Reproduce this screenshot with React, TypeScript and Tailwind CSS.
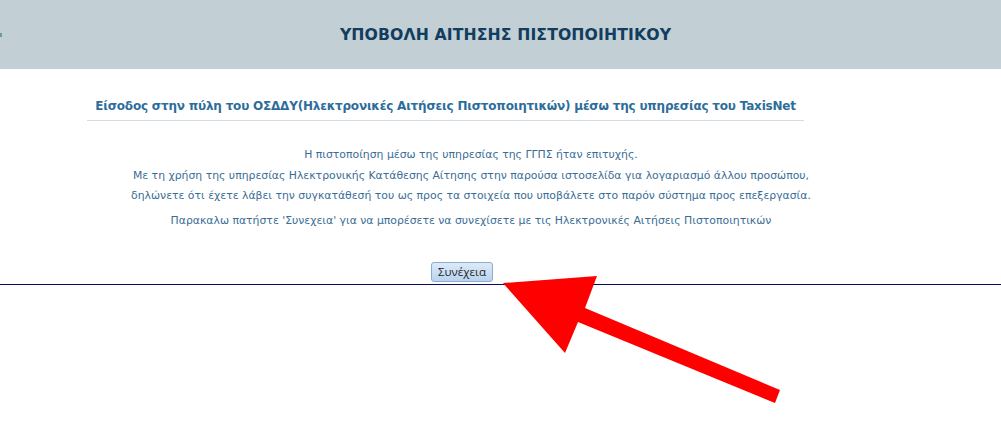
export default function App() {
  return (
    <div className="relative w-[1001px] h-[445px] bg-white overflow-hidden font-['DejaVu_Sans',Verdana,sans-serif]">
      {/* header band */}
      <div className="relative h-[69px] bg-[#c2d0d5] flex items-center justify-center">
        <span className="absolute left-0 top-[33px] w-[2px] h-[4px] bg-[#6f98a6]" />
        <h1 className="pl-[10px] text-[15.7px] font-bold tracking-[0.1px] text-[#123d5e] leading-none">
          ΥΠΟΒΟΛΗ ΑΙΤΗΣΗΣ ΠΙΣΤΟΠΟΙΗΤΙΚΟΥ
        </h1>
      </div>

      <div className="ml-[87px] w-[717px] mt-[28px] pb-[5px] border-b border-[#d3dde4] text-center">
        <h2 className="whitespace-nowrap text-[12px] tracking-[-0.2px] font-bold text-[#2d6d9b] leading-[18px]">
          Είσοδος στην πύλη του ΟΣΔΔΥ(Ηλεκτρονικές Αιτήσεις Πιστοποιητικών) μέσω της υπηρεσίας του TaxisNet
        </h2>
      </div>

      <div className="ml-[87px] w-[768px] mt-[24px] text-center text-[10.85px] text-[#396d96] leading-[20.5px] whitespace-nowrap">
        <p>Η πιστοποίηση μέσω της υπηρεσίας της ΓΓΠΣ ήταν επιτυχής.</p>
        <p>Με τη χρήση της υπηρεσίας Ηλεκτρονικής Κατάθεσης Αίτησης στην παρούσα ιστοσελίδα για λογαριασμό άλλου προσώπου,</p>
        <p>δηλώνετε ότι έχετε λάβει την συγκατάθεσή του ως προς τα στοιχεία που υποβάλετε στο παρόν σύστημα προς επεξεργασία.</p>
        <p className="mt-[4px]">Παρακαλω πατήστε 'Συνεχεια' για να μπορέσετε να συνεχίσετε με τις Ηλεκτρονικές Αιτήσεις Πιστοποιητικών</p>
      </div>

      <div className="flex justify-start pl-[431px] mt-[31px]">
        <button className="w-[62px] h-[20px] rounded-[3px] border border-[#8eadcc] bg-gradient-to-b from-[#dceaf8] to-[#b9d3ef] text-[11.5px] text-[#1e1e1e] leading-none font-['Open_Sans',sans-serif]">
          Συνέχεια
        </button>
      </div>
      <div className="mt-[2px] h-px bg-[#0a0a5c]" />

      {/* red arrow overlay */}
      <svg className="absolute left-0 top-0" width="1001" height="445" viewBox="0 0 1001 445">
        <polygon
          points="503,283 597,276 585,308 780,390 775,403 578,322 565,353"
          fill="#ff0000"
        />
      </svg>
    </div>
  )
}
